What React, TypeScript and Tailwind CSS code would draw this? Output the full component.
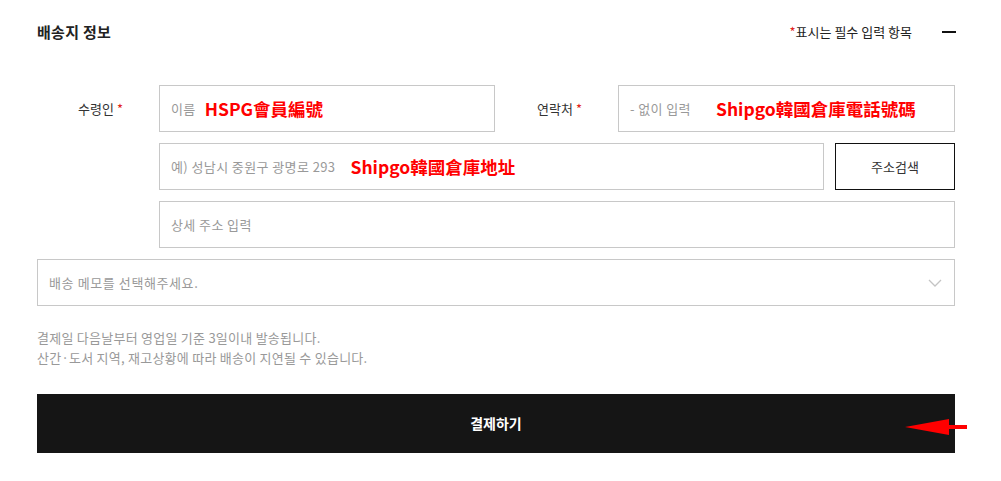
import React from 'react';

const kr = { fontFamily: '"Noto Sans CJK KR", "Noto Sans", sans-serif' };
const tc = { fontFamily: '"Noto Sans CJK TC", "Noto Sans", sans-serif' };

const Field: React.FC<{
  placeholder: string;
  note?: string;
  noteGap?: string;
  className?: string;
}> = ({ placeholder, note, noteGap = 'ml-[16px]', className = '' }) => (
  <div
    className={`h-[47px] border border-[#c8c8c8] bg-white flex items-center pl-[11px] ${className}`}
  >
    <span className="text-[13px] tracking-[0.4px] text-[#999]">{placeholder}</span>
    {note && (
      <span
        className={`${noteGap} text-[17.5px] font-bold text-[#ff0000] leading-none`}
        style={tc}
      >
        {note}
      </span>
    )}
  </div>
);

const Star = () => <span className="text-[#e2231a] ml-[3px]">*</span>;

export default function App() {
  return (
    <div className="w-[1001px] h-[481px] bg-white pl-[37px] pr-[46px]" style={kr}>
      <div className="h-[64px] flex items-center justify-between">
        <h2 className="text-[15px] tracking-[0.3px] font-bold text-[#222]">배송지 정보</h2>
        <div className="flex items-center">
          <span className="text-[13px] text-[#222]">
            <span className="text-[#e2231a]">*</span>표시는 필수 입력 항목
          </span>
          <span className="ml-[30px] mr-[-1px] block w-[14px] h-[2px] bg-[#111]" />
        </div>
      </div>

      <div className="mt-[21px] flex flex-col gap-[11px]">
        <div className="flex items-center">
          <div className="w-[122px] pr-[36px] text-right text-[13px] text-[#333]">
            수령인<Star />
          </div>
          <Field className="w-[336px]" placeholder="이름" note="HSPG會員編號" noteGap="ml-[9px]" />
          <div className="w-[123px] pl-[42px] text-[13px] text-[#333]">
            연락처<Star />
          </div>
          <Field className="flex-1" placeholder="- 없이 입력" note="Shipgo韓國倉庫電話號碼" noteGap="ml-[25px]" />
        </div>

        <div className="flex items-center pl-[122px] gap-[11px]">
          <Field className="flex-1" placeholder="예) 성남시 중원구 광명로 293" note="Shipgo韓國倉庫地址" noteGap="ml-[15px]" />
          <button className="w-[120px] h-[47px] border border-[#111] bg-white text-[13px] text-[#333]">
            주소검색
          </button>
        </div>

        <div className="pl-[122px]">
          <Field placeholder="상세 주소 입력" />
        </div>

        <div className="h-[47px] border border-[#c8c8c8] flex items-center justify-between pl-[11px] pr-[12px]">
          <span className="text-[13px] tracking-[0.6px] text-[#999]">배송 메모를 선택해주세요.</span>
          <svg width="14" height="8" viewBox="0 0 14 8" fill="none">
            <path d="M1 1l6 6 6-6" stroke="#c4c4c4" strokeWidth="1.3" />
          </svg>
        </div>
      </div>

      <div className="mt-[22px] text-[13px] leading-[20px] tracking-[0.25px] text-[#999]">
        <p>결제일 다음날부터 영업일 기준 3일이내 발송됩니다.</p>
        <p>산간·도서 지역, 재고상황에 따라 배송이 지연될 수 있습니다.</p>
      </div>

      <div className="relative mt-[26px]">
        <button className="w-full h-[59px] bg-[#151515] text-white text-[14px] font-bold">
          결제하기
        </button>
        <svg
          className="absolute right-[-12px] top-[24px]"
          width="62"
          height="18"
          viewBox="0 0 62 18"
        >
          <polygon points="0,9 44,1 44,17" fill="#ff0000" />
          <rect x="40" y="7" width="22" height="4" fill="#ff0000" />
        </svg>
      </div>
    </div>
  );
}
